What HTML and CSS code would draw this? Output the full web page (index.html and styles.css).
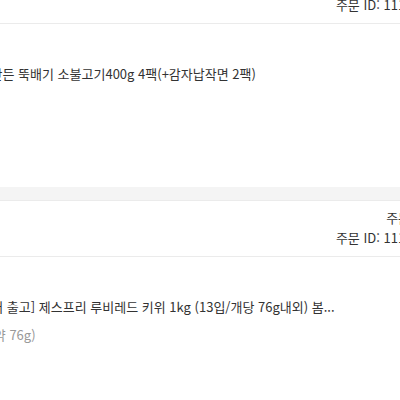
FILE: index.html
```html
<!DOCTYPE html>
<html lang="ko">
<head>
    <meta charset="UTF-8">
    <meta name="viewport" content="width=device-width, initial-scale=1.0">
    <title>주문 내역</title>
<link rel="stylesheet" href="styles.css">
</head>
<body>
<div id="pedidos">

    <div class="pedido">
        <div class="pedido-topo">
            <div class="pedido-info">
                <span>주문상세</span>
                <span>주문 ID: 1111234</span>
            </div>
        </div>
        <div class="pedido-corpo">
            <div class="produto-foto"></div>
            <div class="produto-info">
                <div class="produto-nome">집에서 만든 뚝배기 소불고기400g 4팩(+감자납작면 2팩)</div>
            </div>
        </div>
    </div>

    <div class="pedido-separador"></div>

    <div class="pedido">
        <div class="pedido-topo">
            <div class="pedido-info">
                <span>주문상세</span>
                <span>주문 ID: 1111235</span>
            </div>
        </div>
        <div class="pedido-corpo">
            <div class="produto-foto"></div>
            <div class="produto-info">
                <div class="produto-nome">[산지에서 출고] 제스프리 루비레드 키위 1kg (13입/개당 76g내외) 봄...</div>
                <div class="produto-opcao">(1개 당 약 76g)</div>
            </div>
        </div>
    </div>

</div>
</body>
</html>
```

FILE: styles.css
```css
* {
    box-sizing: border-box;
}

body {
    margin: 0;
    overflow: hidden;
    background-color: #fff;
    color: #333;
    font-family: "Noto Sans CJK KR", "Noto Sans", sans-serif;
    font-size: 13px;
}

#pedidos {
    width: 600px;
    margin: -33px 0 0 -157px;
}

.pedido {
    border-top: 1px solid #ebebeb;
    background-color: #fff;
}

.pedido-separador {
    height: 13px;
    background-color: #f4f4f4;
}

.pedido-topo {
    display: flex;
    justify-content: flex-end;
    padding: 7px 9px 8px 16px;
    border-bottom: 1px solid #ebebeb;
}

.pedido-info {
    display: flex;
    flex-direction: column;
    align-items: flex-end;
    line-height: 20px;
    color: #333;
}

.pedido-corpo {
    display: flex;
    gap: 12px;
    padding: 40px 16px 43px;
}

.produto-foto {
    flex: none;
    width: 80px;
    height: 80px;
    background-color: #f4f4f4;
}

.produto-info {
    min-width: 0;
}

.produto-nome {
    line-height: 20px;
    white-space: nowrap;
}

.produto-opcao {
    margin-top: 8px;
    line-height: 20px;
    color: #999;
}
```
